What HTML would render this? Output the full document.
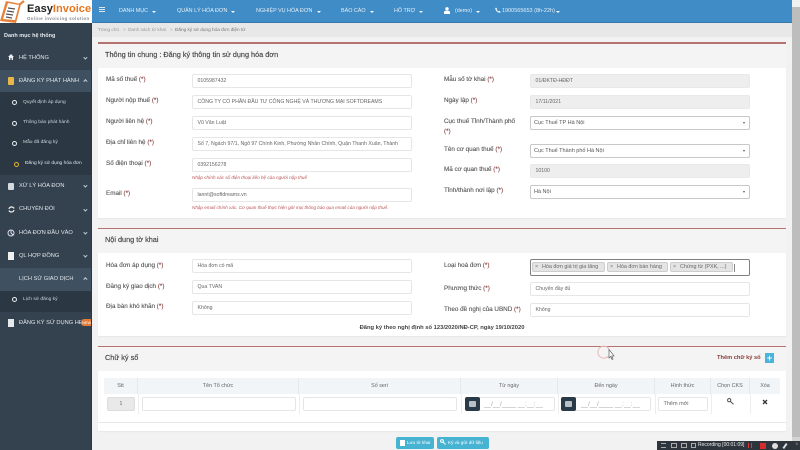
<!DOCTYPE html>
<html lang="vi"><head><meta charset="utf-8"><title>EasyInvoice</title>
<style>
*{box-sizing:border-box}
html,body{margin:0;padding:0;width:800px;height:450px;overflow:hidden;background:#f2f2f2}
body{font-family:"Liberation Sans",sans-serif;position:relative}
#w{position:absolute;left:0;top:0;width:800px;height:450px;overflow:hidden;filter:blur(.35px)}
#w div,#w span.a,#w svg{position:absolute}
.t{white-space:nowrap;line-height:10px}
.nav{color:#e6eff6;font-size:5.4px;top:6px}
.caret{width:0;height:0;border-left:2px solid transparent;border-right:2px solid transparent;border-top:2px solid #fff}
.m{color:#dfe5ea;font-size:5.7px;left:19px}
.sm{color:#cbd3d9;font-size:4.9px;left:23px}
.dot{left:12px;width:5px;height:5px;border:1.3px solid #eee;border-radius:50%}
.chev{left:84px;width:2.8px;height:2.8px;border-right:1px solid #c9d0d6;border-bottom:1px solid #c9d0d6;transform:rotate(45deg)}
.chev.u{transform:rotate(225deg)}
.card{left:98px;width:688px;background:#fff;box-shadow:0 1px 1px #e6e6e6}
.line{left:98px;width:688px;height:1.5px;background:#b5736f}
.head{left:98px;width:688px;height:24px;background:#f4f4f4}
.h{font-size:7.3px;color:#444;left:105px;font-weight:400;-webkit-text-stroke:.15px #444}
.l{font-size:6.3px;color:#555;-webkit-text-stroke:.12px #555;margin-top:.5px}
.l b{color:#a33;font-weight:400}
.i{height:14px;background:#fff;border:1px solid #e6e6e6;border-radius:2px;font-size:5.2px;color:#666;padding:0 4.5px;line-height:13px;white-space:nowrap;overflow:hidden}
.d{background:#eee;border-color:#e8e8e8}
.s{height:14px;background:#fff;border:1px solid #c8c8c8;border-radius:2px;font-size:5.5px;color:#555;padding:0 3px;line-height:12px}
.s:after{content:"";position:absolute;right:4px;top:5px;border-left:1.5px solid transparent;border-right:1.5px solid transparent;border-top:2.5px solid #555}
.hint{font-size:4.6px;color:#b55;font-style:italic;left:192px}
.th{top:378px;height:16px;background:#f1f5f8;border-right:1px solid #e4e8ec;font-size:5.4px;color:#666;text-align:center;line-height:16px}
.sep{top:394px;height:20px;width:1px;background:#eee}
.tag{top:262px;height:10px;background:#e4e4e4;border:1px solid #ccc;border-radius:2px;font-size:5.4px;color:#666;line-height:8px;padding-left:9px;white-space:nowrap;overflow:hidden}
.tag:before{content:"×";position:absolute;left:2px;top:0;color:#777}
.cal{top:397px;width:15px;height:14px;background:#2b3a47;border-radius:2px}
.cal:after{content:"";position:absolute;left:4px;top:4px;width:7px;height:6px;background:#b9c0c6;border-radius:1px}
.btn{top:437px;height:12px;background:#47b3d3;border-radius:2px;color:#fff;font-size:4.6px;line-height:12px;white-space:nowrap}
</style></head><body><div id="w">

<div style="left:92px;top:0;width:700px;height:23px;background:#3f8cc6;border-bottom:1px solid #357aaa"></div>
<div style="left:0;top:0;width:92px;height:23px;background:#fff"></div>
<svg style="left:0;top:0" width="27" height="23" viewBox="0 0 27 23"><path d="M6 1 L21 4 L16 23 L0 21Z" fill="#e8823a"/><path d="M8 3 L19 5 L15 20 L3 19Z" fill="#fff"/><path d="M8 8l7 1M7 11l7 1M6 14l7 1M6 17l6 1" stroke="#555" stroke-width="1.2"/><path d="M19 5l5-4" stroke="#e8823a" stroke-width="2.2"/></svg>
<div class="t" style="left:27px;top:3px;font-size:11.1px;font-weight:700;line-height:13px;letter-spacing:0;color:#222">Easy<span style="color:#e8761f">Invoice</span></div>
<div class="t" style="left:27px;top:15px;font-size:4.3px;font-weight:700;color:#888;letter-spacing:.45px;line-height:8px">Online invoicing solution</div>

<div style="left:99px;top:7px;width:6px;height:5px;border-top:1px solid #dce9f3;border-bottom:1px solid #dce9f3;background:linear-gradient(#3f8cc6 40%,#dce9f3 40%,#dce9f3 60%,#3f8cc6 60%)"></div>
<div class="t nav" style="left:119px">DANH MỤC</div><div class="caret" style="left:152px;top:11px"></div>
<div class="t nav" style="left:177px">QUẢN LÝ HÓA ĐƠN</div><div class="caret" style="left:231px;top:11px"></div>
<div class="t nav" style="left:256px">NGHIỆP VỤ HÓA ĐƠN</div><div class="caret" style="left:317px;top:11px"></div>
<div class="t nav" style="left:341px">BÁO CÁO</div><div class="caret" style="left:370px;top:11px"></div>
<div class="t nav" style="left:394px">HỖ TRỢ</div><div class="caret" style="left:419px;top:11px"></div>
<svg style="left:444px;top:7px" width="6" height="7" viewBox="0 0 6 7"><circle cx="3" cy="1.8" r="1.7" fill="#fff"/><path d="M0 7V5.2Q0 3.8 1.5 3.8H4.5Q6 3.8 6 5.2V7Z" fill="#fff"/></svg>
<div class="t nav" style="left:455px">(demo)</div><div class="caret" style="left:476px;top:11px"></div>
<svg style="left:495px;top:7px" width="6" height="6" viewBox="0 0 6 6"><path d="M1 0.5L2.2 2 1.6 2.8Q2.4 4 3.4 4.5L4.2 3.8 5.7 5 4.8 5.8Q1 5.5 .2 1.4Z" fill="#fff"/></svg>
<div class="t nav" style="left:502px;font-size:5.5px">1900565653 (8h-22h)</div><div class="caret" style="left:556px;top:11px"></div>

<div style="left:0;top:23px;width:92px;height:427px;background:#34424f"></div>
<div style="left:91px;top:23px;width:1px;height:427px;background:#2c3843"></div>
<div class="t" style="left:4px;top:31px;font-size:5.5px;font-weight:700;color:#e4e8ec">Danh mục hệ thống</div>

<svg style="left:8px;top:54px" width="6" height="6" viewBox="0 0 6 6"><path d="M3 0L6 3H5V6H3.6V4H2.4V6H1V3H0Z" fill="#eee"/></svg>
<div class="t m" style="top:53px">HỆ THỐNG</div><div class="chev" style="top:56px"></div>

<div style="left:0;top:70px;width:91px;height:22px;background:#3f5060"></div>
<div style="left:0;top:92px;width:91px;height:83px;background:#2b3844"></div>
<div style="left:8px;top:77px;width:6px;height:8px;background:#e9b64a;border-radius:1px"></div>
<div class="t m" style="top:76px">ĐĂNG KÝ PHÁT HÀNH</div><div class="chev u" style="top:80px"></div>
<div class="dot" style="top:100px"></div><div class="t sm" style="top:98px">Quyết định áp dụng</div>
<div class="dot" style="top:121px"></div><div class="t sm" style="top:118px">Thông báo phát hành</div>
<div class="dot" style="top:141px"></div><div class="t sm" style="top:138px">Mẫu đã đăng ký</div>
<div class="dot" style="top:162px;left:14px;border-color:#e3b23c"></div><div class="t sm" style="top:159px;left:25px;color:#dfe3e6">Đăng ký sử dụng hóa đơn</div>

<div style="left:8px;top:183px;width:6px;height:7px;background:#d5dade;border-radius:1px"></div>
<div class="t m" style="top:181px">XỬ LÝ HÓA ĐƠN</div><div class="chev" style="top:184px"></div>
<svg style="left:8px;top:206px" width="7" height="7" viewBox="0 0 7 7"><path d="M1 3Q1.5 1 3.5 1T6 2.5M6 4Q5.5 6 3.5 6T1 4.5" fill="none" stroke="#eee" stroke-width="1.2"/></svg>
<div class="t m" style="top:204px">CHUYỂN ĐỔI</div><div class="chev" style="top:208px"></div>
<svg style="left:7px;top:229px" width="8" height="8" viewBox="0 0 8 8"><circle cx="4" cy="4" r="3" fill="none" stroke="#dde" stroke-width="1"/><path d="M4 1V4L6 6" stroke="#dde" fill="none"/></svg>
<div class="t m" style="top:228px">HÓA ĐƠN ĐẦU VÀO</div><div class="chev" style="top:231px"></div>
<div style="left:8px;top:252px;width:6px;height:8px;background:#f0f0f0"></div>
<div class="t m" style="top:251px">QL HỢP ĐỒNG</div><div class="chev" style="top:254px"></div>
<div style="left:0;top:268px;width:91px;height:23px;background:#3f5060"></div>
<div style="left:0;top:291px;width:91px;height:21px;background:#2b3844"></div>
<div class="t m" style="top:274px">LỊCH SỬ GIAO DỊCH</div><div class="chev u" style="top:278px"></div>
<div class="dot" style="top:297px"></div><div class="t sm" style="top:295px">Lịch sử đăng ký</div>
<div style="left:8px;top:319px;width:6px;height:8px;background:#e6e9ec"></div>
<div class="t m" style="top:318px;width:62px;overflow:hidden">ĐĂNG KÝ SỬ DỤNG HĐ</div>
<div class="t" style="left:81px;top:319px;width:10px;height:7px;background:#e07b3a;border-radius:3px 0 0 3px;color:#fff;font-size:4px;line-height:7px;padding-left:1px;overflow:hidden">NEW</div>

<div style="left:92px;top:23px;width:700px;height:14px;background:#e8e8e8"></div>
<div class="t" style="left:98px;top:25px;font-size:4.7px;color:#999">Trang chủ</div>
<div class="t" style="left:123px;top:25px;font-size:4.7px;color:#aaa">&gt;</div>
<div class="t" style="left:128px;top:25px;font-size:4.7px;color:#999">Danh sách tờ khai</div>
<div class="t" style="left:170px;top:25px;font-size:4.7px;color:#aaa">&gt;</div>
<div class="t" style="left:175px;top:25px;font-size:4.7px;color:#777">Đăng ký sử dụng hóa đơn điện tử</div>

<div style="left:792px;top:0;width:8px;height:450px;background:#d4d4d4"></div>
<div style="left:792px;top:0;width:8px;height:7px;background:#f1f1f1"></div>
<div style="left:792px;top:7px;width:8px;height:430px;background:#bdbdbd"></div>

<div class="line" style="top:42px"></div><div class="head" style="top:44px"></div>
<div class="card" style="top:68px;height:150px"></div>
<div class="t h" style="top:50px">Thông tin chung : Đăng ký thông tin sử dụng hóa đơn</div>

<div class="t l" style="left:106px;top:74px">Mã số thuế <b>(*)</b></div><div class="i" style="left:192px;top:74px;width:220px">0105987432</div>
<div class="t l" style="left:106px;top:95px">Người nộp thuế <b>(*)</b></div><div class="i" style="left:192px;top:95px;width:220px">CÔNG TY CỔ PHẦN ĐẦU TƯ CÔNG NGHỆ VÀ THƯƠNG MẠI SOFTDREAMS</div>
<div class="t l" style="left:106px;top:116px">Người liên hệ <b>(*)</b></div><div class="i" style="left:192px;top:116px;width:220px">Vũ Văn Luật</div>
<div class="t l" style="left:106px;top:137px">Địa chỉ liên hệ <b>(*)</b></div><div class="i" style="left:192px;top:137px;width:220px">Số 7, Ngách 97/1, Ngõ 97 Chính Kinh, Phường Nhân Chính, Quận Thanh Xuân, Thành</div>
<div class="t l" style="left:106px;top:158px">Số điện thoại <b>(*)</b></div><div class="i" style="left:192px;top:158px;width:220px">0392156278</div>
<div class="t hint" style="top:173px">Nhập chính xác số điện thoại liên hệ của người nộp thuế</div>
<div class="t l" style="left:106px;top:188px">Email <b>(*)</b></div><div class="i" style="left:192px;top:188px;width:220px">lannt@softdreams.vn</div>
<div class="t hint" style="top:203px">Nhập email chính xác. Cơ quan thuế thực hiện gửi mọi thông báo qua email của người nộp thuế.</div>

<div class="t l" style="left:444px;top:74px">Mẫu số tờ khai <b>(*)</b></div><div class="i d" style="left:530px;top:74px;width:220px">01/ĐKTĐ-HĐĐT</div>
<div class="t l" style="left:444px;top:95px">Ngày lập <b>(*)</b></div><div class="i d" style="left:530px;top:95px;width:220px">17/11/2021</div>
<div class="t l" style="left:444px;top:116px">Cục thuế Tỉnh/Thành phố</div><div class="t l" style="left:444px;top:126px"><b>(*)</b></div><div class="s" style="left:530px;top:116px;width:220px">Cục Thuế TP Hà Nội</div>
<div class="t l" style="left:444px;top:144px">Tên cơ quan thuế <b>(*)</b></div><div class="s" style="left:530px;top:144px;width:220px">Cục Thuế Thành phố Hà Nội</div>
<div class="t l" style="left:444px;top:164px">Mã cơ quan thuế <b>(*)</b></div><div class="i d" style="left:530px;top:164px;width:220px">10100</div>
<div class="t l" style="left:444px;top:185px">Tỉnh/thành nơi lập <b>(*)</b></div><div class="s" style="left:530px;top:185px;width:220px">Hà Nội</div>

<div class="line" style="top:228px"></div><div class="head" style="top:229px"></div>
<div class="card" style="top:253px;height:83px"></div>
<div class="t h" style="top:235px">Nội dung tờ khai</div>
<div class="t l" style="left:106px;top:260px">Hóa đơn áp dụng <b>(*)</b></div><div class="i" style="left:192px;top:259px;width:220px">Hóa đơn có mã</div>
<div class="t l" style="left:106px;top:281px">Đăng ký giao dịch <b>(*)</b></div><div class="i" style="left:192px;top:280px;width:220px">Qua TVAN</div>
<div class="t l" style="left:106px;top:301px">Địa bàn khó khăn <b>(*)</b></div><div class="i" style="left:192px;top:301px;width:220px">Không</div>
<div class="t l" style="left:444px;top:260px">Loại hoá đơn <b>(*)</b></div>
<div style="left:530px;top:259px;width:220px;height:17px;border:1px solid #808080;border-radius:2px;background:#fff"></div>
<div class="tag" style="left:532px;width:73px">Hóa đơn giá trị gia tăng</div>
<div class="tag" style="left:607px;width:61px">Hóa đơn bán hàng</div>
<div class="tag" style="left:670px;width:63px">Chứng từ (PXK, ...)</div>
<div style="left:734px;top:264px;width:1px;height:8px;background:#888"></div>
<div class="t l" style="left:444px;top:283px">Phương thức <b>(*)</b></div><div class="i" style="left:530px;top:282px;width:220px">Chuyển đầy đủ</div>
<div class="t l" style="left:444px;top:304px">Theo đề nghị của UBND <b>(*)</b></div><div class="i" style="left:530px;top:303px;width:220px">Không</div>
<div class="t" style="left:98px;width:688px;text-align:center;top:323px;font-size:5.8px;font-weight:700;color:#444">Đăng ký theo nghị định số 123/2020/NĐ-CP, ngày 19/10/2020</div>

<div class="line" style="top:345.5px"></div><div class="head" style="top:347px"></div>
<div class="card" style="top:371px;height:60px"></div>
<div style="left:98px;top:422px;width:688px;height:1px;background:#e8e8e8"></div>
<div class="t h" style="top:353px">Chữ ký số</div>
<div class="t" style="left:717px;top:353px;font-size:5.7px;font-weight:700;color:#8a3a3a">Thêm chữ ký số</div>
<div style="left:765px;top:353px;width:9px;height:10px;background:#4bb3dc;color:#fff;font-size:9px;font-weight:700;line-height:10px;text-align:center">+</div>
<svg style="left:596px;top:345px" width="22" height="16" viewBox="0 0 22 16"><path d="M12.5 11A6 6 0 1 1 13 4" fill="none" stroke="#eab8b8" stroke-width="1"/><path d="M13 4.5V13L14.8 11.5 16 14.5 17 14 15.8 11H18Z" fill="#fff" stroke="#444" stroke-width=".6"/></svg>

<div class="th" style="left:104px;width:34px">Stt</div>
<div class="th" style="left:138px;width:161px">Tên Tổ chức</div>
<div class="th" style="left:299px;width:162px">Số seri</div>
<div class="th" style="left:461px;width:97px">Từ ngày</div>
<div class="th" style="left:558px;width:97px">Đến ngày</div>
<div class="th" style="left:655px;width:56px">Hình thức</div>
<div class="th" style="left:711px;width:39px">Chọn CKS</div>
<div class="th" style="left:750px;width:30px;border-right:0">Xóa</div>
<div class="sep" style="left:138px"></div><div class="sep" style="left:299px"></div><div class="sep" style="left:461px"></div><div class="sep" style="left:558px"></div><div class="sep" style="left:655px"></div><div class="sep" style="left:711px"></div><div class="sep" style="left:750px"></div>
<div class="i d" style="left:107px;top:397px;width:28px;text-align:center;background:#e9e9e9;border-color:#ddd">1</div>
<div class="i" style="left:142px;top:397px;width:154px"></div>
<div class="i" style="left:303px;top:397px;width:154px"></div>
<div class="i" style="left:465px;top:397px;width:90px"></div><div class="cal" style="left:465px"></div>
<div class="t" style="left:484px;top:400px;font-size:6px;color:#999;letter-spacing:.2px">__/__/____ __:__:__</div>
<div class="i" style="left:562px;top:397px;width:89px"></div><div class="cal" style="left:561px"></div>
<div class="t" style="left:581px;top:400px;font-size:6px;color:#999;letter-spacing:.2px">__/__/____ __:__:__</div>
<div class="i" style="left:658px;top:397px;width:50px;font-size:5.5px">Thêm mới</div>
<svg style="left:727px;top:398px" width="7" height="7" viewBox="0 0 7 7"><circle cx="2.2" cy="2.2" r="1.6" fill="none" stroke="#444" stroke-width=".9"/><path d="M3.5 3.5L6.5 6.3" stroke="#444" stroke-width=".9"/></svg>
<svg style="left:762px;top:399px" width="6" height="6" viewBox="0 0 6 6"><path d="M1 1L5 5M5 1L1 5" stroke="#333" stroke-width="1.3"/></svg>

<div class="btn" style="left:396px;width:38px;padding-left:11px">Lưu tờ khai</div>
<div style="left:400px;top:440px;width:5px;height:6px;background:#fff"></div>
<div class="btn" style="left:437px;width:52px;padding-left:11px">Ký và gửi dữ liệu</div>
<svg style="left:440px;top:439px" width="6" height="6" viewBox="0 0 6 6"><circle cx="2" cy="2" r="1.4" fill="none" stroke="#fff"/><path d="M3 3L5.5 5.5" stroke="#fff"/></svg>

<div style="left:657px;top:441px;width:143px;height:9px;background:#2f353c"></div>
<div class="t" style="left:698px;top:441px;font-size:5px;color:#e8e8e8;line-height:9px">Recording [00:01:09]</div>
<div style="left:661px;top:443px;width:5px;height:5px;border-top:1px solid #aaa;border-bottom:1px solid #aaa"></div>
<div style="left:671px;top:443px;width:6px;height:5px;border:1px solid #aaa"></div>
<div style="left:681px;top:443px;width:6px;height:5px;border:1px solid #aaa"></div>
<div style="left:691px;top:443px;width:5px;height:5px;border:1px solid #aaa"></div>
<div style="left:748px;top:443px;width:1px;height:5px;background:#d33"></div><div style="left:751px;top:443px;width:1px;height:5px;background:#d33"></div>
<div style="left:760px;top:443px;width:6px;height:6px;background:#d62b2b"></div>
<div style="left:772px;top:443px;width:6px;height:6px;background:#ddd;border-radius:50%"></div>
<div style="left:784px;top:443px;width:2px;height:6px;background:#ddd;transform:rotate(35deg)"></div>
<div class="t" style="left:795px;top:441px;font-size:6px;color:#888;line-height:9px">×</div>
</div></body></html>
